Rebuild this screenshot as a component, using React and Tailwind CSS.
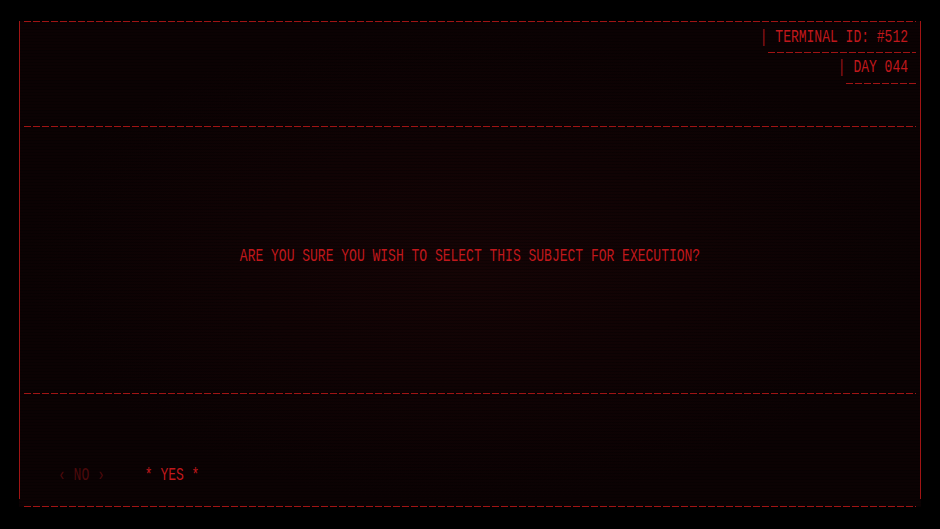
import React from 'react';

const mono = "font-['Liberation_Mono','DejaVu_Sans_Mono',monospace]";
const dash = 'h-px bg-[repeating-linear-gradient(90deg,#a01414_0_7px,transparent_7px_9px)]';

function Tall({ children, className = '' }) {
  return <span className={`inline-block scale-y-[1.35] ${className}`}>{children}</span>;
}

export default function App() {
  return (
    <div className={`w-[940px] h-[529px] bg-black overflow-hidden pt-[21px] pl-[19px] ${mono}`}>
      <div className="relative w-[902px] h-[486px] bg-[#0b0203] bg-[radial-gradient(ellipse_at_center,#150405_0%,#0b0203_70%)]">
        {/* scanlines */}
        <div className="pointer-events-none absolute inset-0 bg-[repeating-linear-gradient(0deg,rgba(0,0,0,0.3)_0_1px,transparent_1px_3px)]" />

        {/* side rails */}
        <div className="absolute left-0 top-0 bottom-[8px] w-px bg-[#a01414]" />
        <div className="absolute right-0 top-0 bottom-[8px] w-px bg-[#a01414]" />

        <div className="relative flex flex-col h-full px-[5px]">
          <div className={dash} />

          {/* header */}
          <div className="h-[104px] flex flex-col items-end pt-[8px] text-[13px] text-[#c0181c]">
            <div className="pr-[8px] h-[16px] leading-[16px]">
              <Tall><span className="text-[#a01418]">|</span> TERMINAL ID: #512</Tall>
            </div>
            <div className={`${dash} w-[148px] mt-[6px]`} />
            <div className="pr-[8px] h-[16px] leading-[16px] mt-[7px]">
              <Tall><span className="text-[#a01418]">|</span> DAY 044</Tall>
            </div>
            <div className={`${dash} w-[70px] mt-[7px]`} />
          </div>

          <div className={dash} />

          {/* message */}
          <div className="h-[266px] flex items-center justify-center">
            <div className="text-[13px] text-[#c0181c] leading-[16px] -mt-[7px]">
              <Tall>ARE YOU SURE YOU WISH TO SELECT THIS SUBJECT FOR EXECUTION?</Tall>
            </div>
          </div>

          <div className={dash} />

          {/* actions */}
          <div className="h-[112px] flex items-end pb-[22px] pl-[34px] gap-[40px] text-[13px] leading-[16px]">
            <div className="text-[#4e0a0c]">
              <Tall>‹ NO ›</Tall>
            </div>
            <div className="text-[#c0181c]">
              <Tall>* YES *</Tall>
            </div>
          </div>

          <div className={dash} />
        </div>
      </div>
    </div>
  );
}
